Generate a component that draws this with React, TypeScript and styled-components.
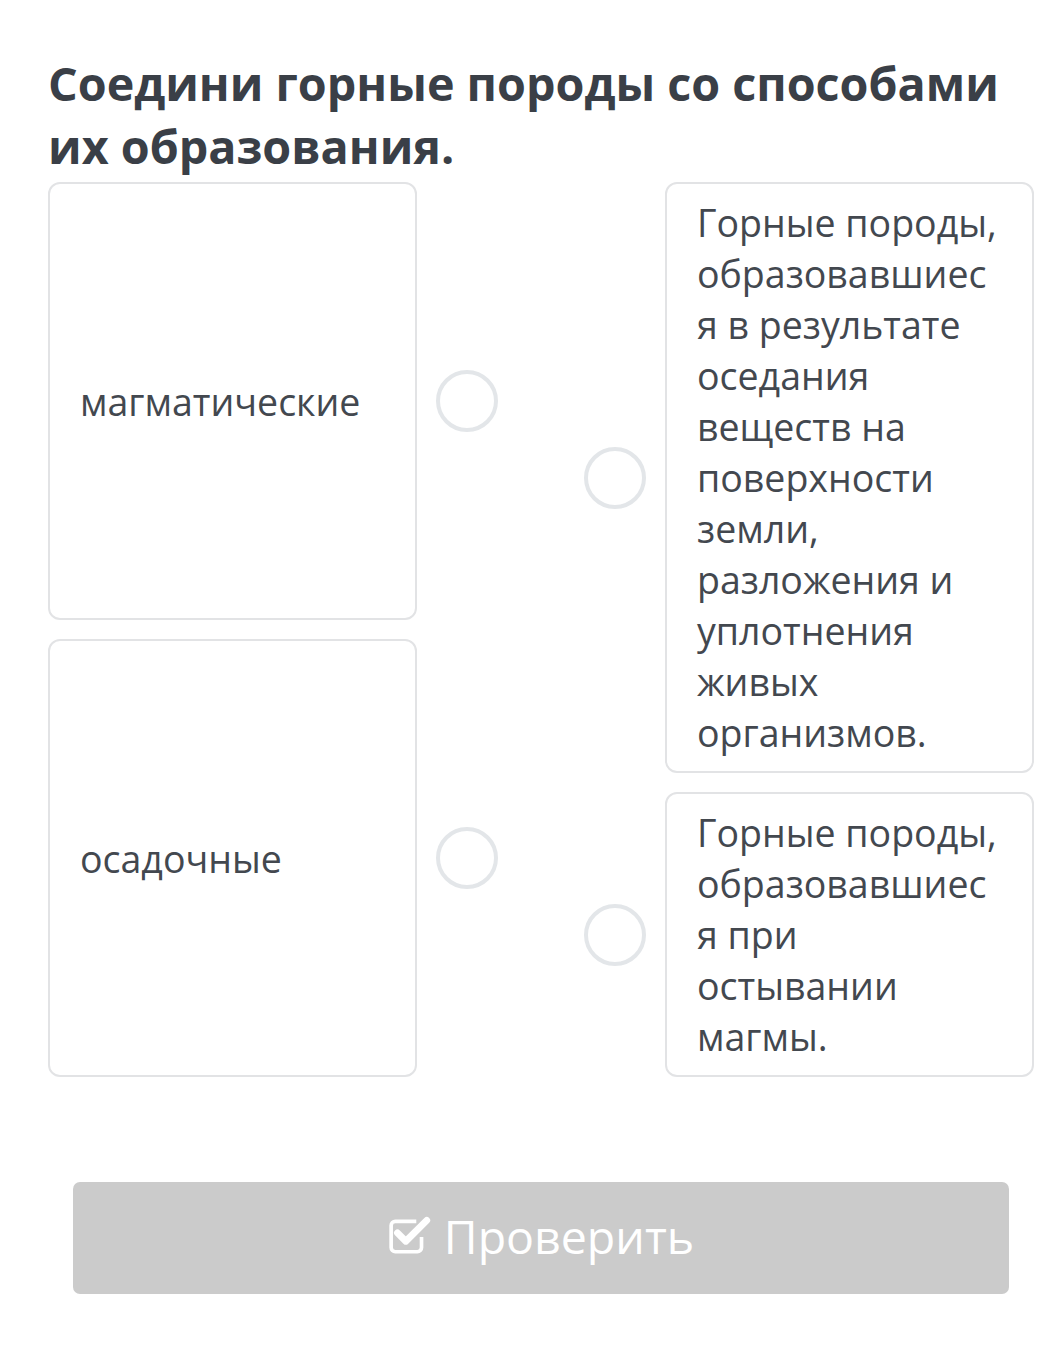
import styled, {createGlobalStyle} from "styled-components";

const GlobalStyle = createGlobalStyle`
  body {
    margin: 0;
    background: #fff;
    font-family: "Open Sans", "Noto Sans", sans-serif;
  }
`;

const Page = styled.div`
  width: 1062px;
  padding: 52px 28px 58px 48px;
  box-sizing: border-box;
`;

const Title = styled.h1`
  margin: 0 0 4px;
  font-size: 46.7px;
  line-height: 63px;
  font-weight: 700;
  color: #3a3f47;
`;

const Board = styled.div`
  display: flex;
  justify-content: space-between;
  align-items: stretch;
`;

const Column = styled.div`
  display: flex;
  flex-direction: column;
  gap: 19px;
`;

const Row = styled.div<{$grow?: boolean}>`
  display: flex;
  align-items: center;
  gap: 19px;
  flex: ${(p) => (p.$grow ? "1 1 0" : "0 0 auto")};
`;

const Card = styled.div<{$stretch?: boolean}>`
  width: 369px;
  box-sizing: border-box;
  align-self: stretch;
  display: flex;
  align-items: ${(p) => (p.$stretch ? "center" : "flex-start")};
  padding: 13px 30px;
  border: 2px solid #e2e3e5;
  border-radius: 12px;
  background: #fff;
  font-size: 37.5px;
  line-height: 51px;
  color: #43484f;
  overflow-wrap: break-word;
  word-break: break-word;
`;

const Dot = styled.div`
  width: 62px;
  height: 62px;
  flex: 0 0 62px;
  box-sizing: border-box;
  border: 4px solid #e3e6e9;
  border-radius: 50%;
`;

const CheckButton = styled.button`
  display: flex;
  align-items: center;
  justify-content: center;
  gap: 12px;
  width: 936px;
  height: 112px;
  margin: 105px 0 0 25px;
  border: none;
  border-radius: 7px;
  background: #cbcbcb;
  color: #fff;
  font-family: "Open Sans", "Noto Sans", sans-serif;
  font-size: 46.5px;
  padding: 0 0 4px;
`;

const CheckIcon = () => (
  <svg width="44" height="40" viewBox="0 0 42 38">
    <path
      d="M32 20 V30 a4 4 0 0 1 -4 4 H7 a4 4 0 0 1 -4 -4 V9 a4 4 0 0 1 4 -4 H27"
      fill="none"
      stroke="#fff"
      strokeWidth="3.5"
    />
    <path
      d="M9 16 L17 24 L37 4"
      fill="none"
      stroke="#fff"
      strokeWidth="6.5"
      strokeLinecap="round"
      strokeLinejoin="round"
    />
  </svg>
);

const leftItems = ["магматические", "осадочные"];
const rightItems = [
  "Горные породы, образовавшиеся в результате оседания веществ на поверхности земли, разложения и уплотнения живых организмов.",
  "Горные породы, образовавшиеся при остывании магмы.",
];

export default function App() {
  return (
    <>
      <GlobalStyle />
      <Page>
        <Title>Соедини горные породы со способами их образования.</Title>
        <Board>
          <Column>
            {leftItems.map((t) => (
              <Row key={t} $grow>
                <Card $stretch>{t}</Card>
                <Dot />
              </Row>
            ))}
          </Column>
          <Column>
            {rightItems.map((t) => (
              <Row key={t}>
                <Dot />
                <Card>{t}</Card>
              </Row>
            ))}
          </Column>
        </Board>
        <CheckButton>
          <CheckIcon />
          Проверить
        </CheckButton>
      </Page>
    </>
  );
}
